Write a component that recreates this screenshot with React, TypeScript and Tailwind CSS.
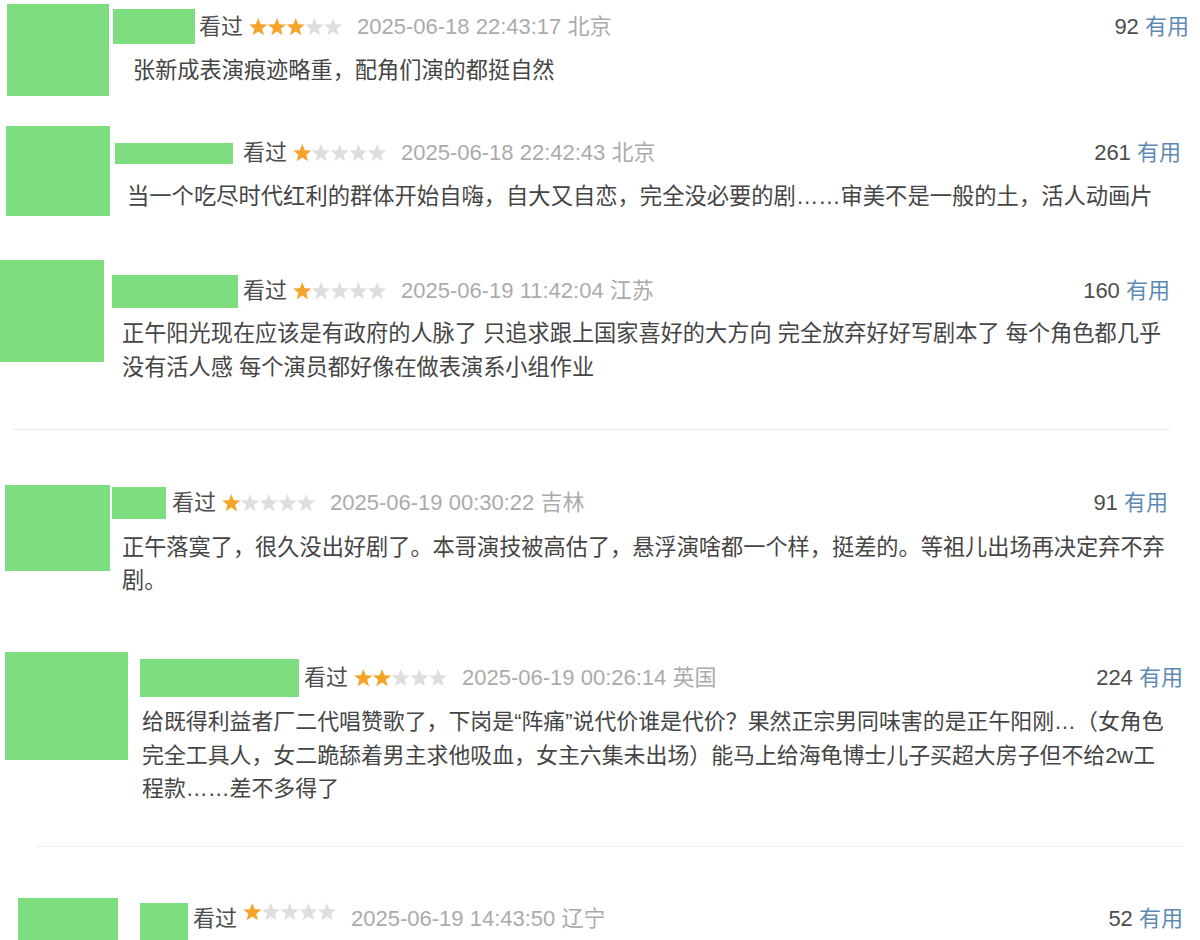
import React from "react";

function starPoints(cx: number, cy: number, R: number, r: number) {
  const pts: string[] = [];
  for (let i = 0; i < 10; i++) {
    const ang = (Math.PI / 5) * i - Math.PI / 2;
    const rad = i % 2 === 0 ? R : r;
    pts.push(`${(cx + rad * Math.cos(ang)).toFixed(2)},${(cy + rad * Math.sin(ang)).toFixed(2)}`);
  }
  return pts.join(" ");
}

function Stars({ n }: { n: number }) {
  return (
    <svg width="94" height="20" viewBox="0 0 94 20" className="ml-[6px] shrink-0">
      {[0, 1, 2, 3, 4].map((i) => (
        <polygon
          key={i}
          points={starPoints(9.3 + i * 18.7, 10.5, 9.6, 4.1)}
          fill={i < n ? "#f6a32a" : "#dedede"}
        />
      ))}
    </svg>
  );
}

type Props = {
  rowCls: string;
  avatarCls: string;
  contentCls: string;
  headerCls: string;
  nameCls: string;
  kanCls: string;
  textCls: string;
  stars: number;
  date: string;
  count: string;
  lines: string[];
};

function Comment(p: Props) {
  return (
    <div className={"flex shrink-0 " + p.rowCls}>
      <div className={"shrink-0 bg-[#7edd7f] " + p.avatarCls} />
      <div className={"flex flex-1 flex-col " + p.contentCls}>
        <div className={"flex " + p.headerCls}>
          <div className={"shrink-0 bg-[#7edd7f] " + p.nameCls} />
          <span className={"text-[#4d4d4d] " + p.kanCls}>看过</span>
          <Stars n={p.stars} />
          <span className="ml-[14px] text-[#ababab]">{p.date}</span>
          <span className="ml-auto text-[#4d4d4d]">
            {p.count} <span className="text-[#5d8ab5]">有用</span>
          </span>
        </div>
        {p.lines.length > 0 && (
          <div className={"text-[#454545] " + p.textCls}>
            {p.lines.map((l, i) => (
              <div key={i} className="whitespace-nowrap">
                {l}
              </div>
            ))}
          </div>
        )}
      </div>
    </div>
  );
}

export default function App() {
  return (
    <div
      className="flex h-[940px] w-[1200px] flex-col overflow-hidden bg-white text-[22px] leading-[34px]"
      style={{ fontFamily: '"Liberation Sans", "Noto Sans CJK SC", sans-serif' }}
    >
      <Comment
        rowCls="h-[126px] pl-[7px] pt-[4px]"
        avatarCls="w-[102px] h-[92px]"
        contentCls="ml-[4px] pr-[11px] pt-[5px]"
        headerCls="items-center h-[35px]"
        nameCls="w-[82px] h-[35px]"
        kanCls="ml-[4px]"
        textCls="mt-[10px] pl-[20px] text-[22.2px]"
        stars={3}
        date="2025-06-18 22:43:17 北京"
        count="92"
        lines={["张新成表演痕迹略重，配角们演的都挺自然"]}
      />
      <Comment
        rowCls="h-[134px] pl-[6px]"
        avatarCls="w-[104px] h-[90px]"
        contentCls="ml-[5px] pr-[19px] pt-[10px]"
        headerCls="items-center h-[34px]"
        nameCls="w-[118px] h-[21px]"
        kanCls="ml-[10px]"
        textCls="mt-[10px] pl-[12px] text-[22.3px]"
        stars={1}
        date="2025-06-18 22:42:43 北京"
        count="261"
        lines={["当一个吃尽时代红利的群体开始自嗨，自大又自恋，完全没必要的剧……审美不是一般的土，活人动画片"]}
      />
      <Comment
        rowCls="h-[169px]"
        avatarCls="w-[104px] h-[102px]"
        contentCls="ml-[8px] pr-[30px] pt-[14px]"
        headerCls="items-center h-[34px]"
        nameCls="w-[126px] h-[33px]"
        kanCls="ml-[5px]"
        textCls="mt-[9px] pl-[10px] text-[22.2px]"
        stars={1}
        date="2025-06-19 11:42:04 江苏"
        count="160"
        lines={[
          "正午阳光现在应该是有政府的人脉了 只追求跟上国家喜好的大方向 完全放弃好好写剧本了 每个角色都几乎",
          "没有活人感 每个演员都好像在做表演系小组作业",
        ]}
      />
      <div className="ml-[12px] h-px w-[1158px] shrink-0 bg-[#ededed]" />
      <Comment
        rowCls="h-[222px] pl-[5px] pt-[55px]"
        avatarCls="w-[105px] h-[86px]"
        contentCls="ml-[2px] pr-[32px] pt-[1px]"
        headerCls="items-center h-[34px]"
        nameCls="w-[54px] h-[32px]"
        kanCls="ml-[6px]"
        textCls="mt-[11px] pl-[10px] leading-[33px] text-[22.2px]"
        stars={1}
        date="2025-06-19 00:30:22 吉林"
        count="91"
        lines={[
          "正午落寞了，很久没出好剧了。本哥演技被高估了，悬浮演啥都一个样，挺差的。等祖儿出场再决定弃不弃",
          "剧。",
        ]}
      />
      <Comment
        rowCls="h-[194px] pl-[5px]"
        avatarCls="w-[123px] h-[108px]"
        contentCls="ml-[12px] pr-[17px] pt-[7px]"
        headerCls="items-center h-[38px]"
        nameCls="w-[159px] h-[38px]"
        kanCls="ml-[5px]"
        textCls="mt-[8px] pl-[2px] leading-[33.5px] text-[21.9px]"
        stars={2}
        date="2025-06-19 00:26:14 英国"
        count="224"
        lines={[
          "给既得利益者厂二代唱赞歌了，下岗是“阵痛”说代价谁是代价？果然正宗男同味害的是正午阳刚…（女角色",
          "完全工具人，女二跪舔着男主求他吸血，女主六集未出场）能马上给海龟博士儿子买超大房子但不给2w工",
          "程款……差不多得了",
        ]}
      />
      <div className="ml-[37px] h-px w-[1146px] shrink-0 bg-[#ededed]" />
      <Comment
        rowCls="h-[100px] pl-[18px] pt-[51px]"
        avatarCls="w-[100px] h-[60px]"
        contentCls="ml-[22px] pr-[17px] pt-[4px]"
        headerCls="items-start h-[60px]"
        nameCls="w-[48px] h-[50px] mt-[1px]"
        kanCls="ml-[5px]"
        textCls=""
        stars={1}
        date="2025-06-19 14:43:50 辽宁"
        count="52"
        lines={[]}
      />
    </div>
  );
}
